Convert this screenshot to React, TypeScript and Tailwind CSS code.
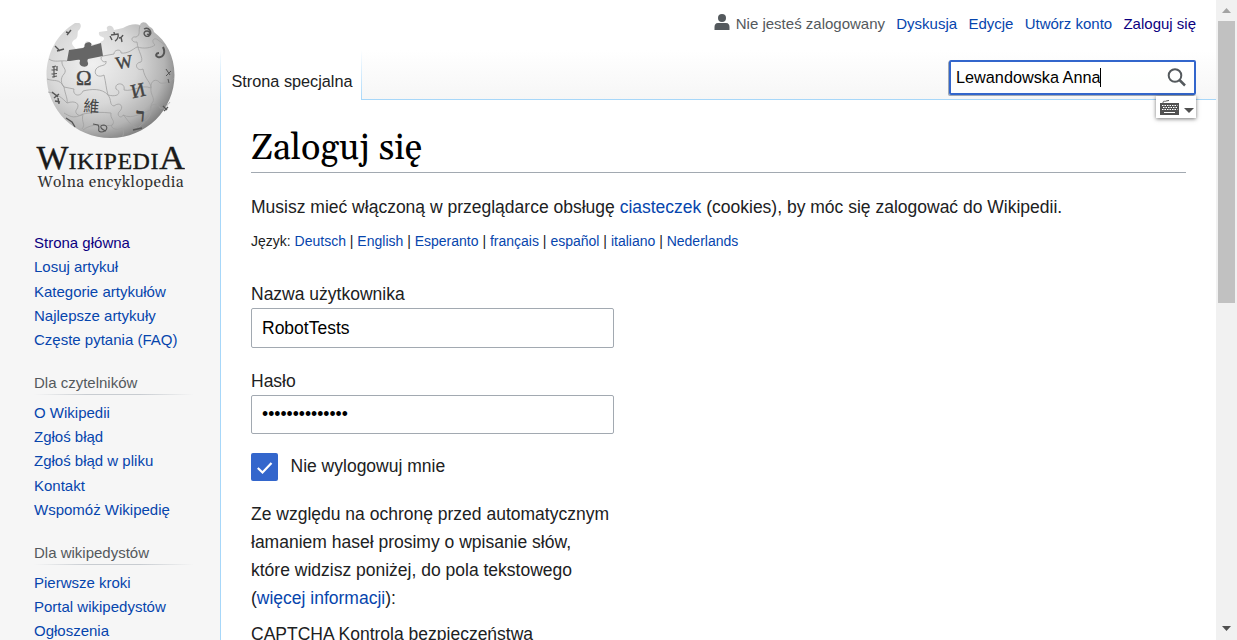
import type { ReactNode } from "react";

const sections: { title?: string; items: string[] }[] = [
  { items: ["Strona główna", "Losuj artykuł", "Kategorie artykułów", "Najlepsze artykuły", "Częste pytania (FAQ)"] },
  { title: "Dla czytelników", items: ["O Wikipedii", "Zgłoś błąd", "Zgłoś błąd w pliku", "Kontakt", "Wspomóż Wikipedię"] },
  { title: "Dla wikipedystów", items: ["Pierwsze kroki", "Portal wikipedystów", "Ogłoszenia"] },
];

const languages = ["Deutsch", "English", "Esperanto", "français", "español", "italiano", "Nederlands"];

function Link({ children, visited = false }: { children: ReactNode; visited?: boolean }) {
  return (
    <a href="#" className={visited ? "text-[#0b0080]" : "text-[#0645ad]"}>
      {children}
    </a>
  );
}

function Logo() {
  return (
    <svg className="block h-[190px] w-[150px]" viewBox="35 10 150 190" aria-label="Wikipedia">
      <defs>
        <radialGradient id="globe" cx="0.36" cy="0.36" r="0.7">
          <stop offset="0" stopColor="#f0f0f0" />
          <stop offset="0.5" stopColor="#d8d8d8" />
          <stop offset="0.8" stopColor="#b4b4b4" />
          <stop offset="1" stopColor="#7c7c7c" />
        </radialGradient>
      </defs>
      <path
        d="M79 23 L75 23 C57 34 46.500 53 46.500 75 C46.500 110 75 138 110.500 138 C146 138 174.500 110 174.500 75 C174.500 56 166 41 154 32 C153 27 150 28 148 25 C145 21 141 22 140 25 C135 23 128 25 123 28 L114 30 C113 25 109 25 107 27 C106 29 109 31 106 31 L99 32 C98 37 102 36 104 38 C104 42 101 40 100 43 L90 45 C91 41 86 40 85 43 C84 46 87 46 85 47 L76 49 C73 45 70 44 74 40 C79 38 77 34 78 31 C81 29 82 24 79 23 Z"
        fill="url(#globe)"
      />
      <path
        d="M69 50 L83 48 C86 47 83 45 86 43 C89 41 93 43 91 46 L101 43 L103 56 L88 59 C86 62 90 63 87 66 C83 68 78 65 80 61 C81 58 73 61 67 61 Z"
        fill="#666"
      />
      <g fill="none" stroke="#a0a0a0" strokeWidth="0.8">
        <path d="M103 56 C98 58 104 64 106 61 C107 67 100 64 96 69 C93 75 99 78 104 75 C106 83 106 88 108 95 C120 98 121 91 116 89 C114 82 126 82 124 90 C133 92 141 84 151 88 C150 80 157 78 160 83 C166 84 171 81 174 78" />
        <path d="M103 56 L114 54 C114 49 122 49 121 53 C128 54 133 49 137 47 C144 49 151 48 155 45 C150 40 155 37 158 40 L165 45" />
        <path d="M140 26 C138 31 141 35 136 37 C130 36 131 43 137 42 C138 52 144 58 141 62 C133 63 137 72 143 69 C145 80 151 82 151 88" />
        <path d="M62 61 C61 67 68 69 64 74 C60 78 61 84 64 87 L74 89 C72 95 80 98 83 91 C91 89 102 88 108 95" />
        <path d="M49 59 C54 63 61 60 67 61 M47 79 C55 82 59 78 64 87 C65 94 68 99 67 103 C76 100 80 104 77 109 C73 113 80 118 83 114 C93 112 102 112 111 113" />
        <path d="M108 95 C112 100 109 105 114 106 C120 101 125 107 119 112 C116 116 122 119 123 115 C132 120 144 112 151 110 C148 104 158 102 160 108 C164 109 168 105 170 102" />
        <path d="M151 88 C150 94 155 98 153 102 C150 104 152 107 151 110 C151 118 145 121 139 127 M111 113 C110 119 115 120 113 124 C108 127 117 132 122 128 C124 130 124 135 122 137" />
        <path d="M48 92 C58 94 62 98 67 103 M64 113 C68 115 73 120 83 114 M83 114 C81 123 86 124 82 129 M83 130 C96 120 111 129 113 124 M123 115 C128 119 128 124 137 128" />
      </g>
      <g fill="#444" stroke="#444" strokeWidth="0.4" className="font-['Liberation_Serif','Noto_Sans_CJK_TC',serif]">
        <text x="76" y="85" fontSize="21">Ω</text>
        <text x="115.500" y="68" fontSize="18" transform="rotate(-10 124 62)">W</text>
        <text x="131" y="97" fontSize="20" transform="rotate(-13 138 91)">И</text>
        <text x="83.500" y="112" fontSize="16" strokeWidth="0" transform="rotate(4 91 106)">維</text>
        <text x="136" y="121" fontSize="18" fontWeight="bold" transform="rotate(5 140 115)">ר</text>
      </g>
      <g fill="none" stroke="#555" strokeWidth="1.400">
        <path d="M110 36 L112 40 M111 35 L118 34 C119 37 117 40 115 41 M114 32 L114.500 35 M123 35 C122 37 120 38 119 38 M121 37 L122 42" />
        <path d="M55 46 L60 51 M57 51 L64 49 M66 32 L69 33 M67 35 L71 30" />
        <path d="M52 67 L56 66 M51.500 70 L57 69.500 M54 66 V78 M51.500 74 L57 73.500 M57 66 V71 M52 77 L57 76" strokeWidth="1.200" />
        <path d="M52 92 L58 97 M54 98 L59 94 M55 101 L60 102 M58 98 L59 104" />
        <path d="M144 29 C149 26 153 33 149 36 C144 38 142 31 147 31 C151 31 150 36 147 34" />
        <path d="M163 47 C166 53 163 58 158 57 C155 56 156 53 159 53" strokeWidth="2" />
        <path d="M93 124 L98 125 C101 128 96 131 101 132 C107 132 109 126 104 125 C99 125 100 129 106 131" strokeWidth="1.1" />
        <path d="M66 118 L72 122 L75 127 M163 106 L167 110 M164 111 L168 107 M133 130 L142 128" />
        <path d="M166 69 L170 75 M166 76 L171 71 M168 79 L169 83" strokeWidth="1" />
      </g>
      <g fill="#1a1a1a" stroke="#1a1a1a" strokeWidth="0.350" className="font-['Liberation_Serif',serif]">
        <text x="36.500" y="169" fontSize="33" textLength="32" lengthAdjust="spacingAndGlyphs">W</text>
        <text x="68.500" y="169" fontSize="24" textLength="90" lengthAdjust="spacing">IKIPEDI</text>
        <text x="159" y="169" fontSize="33" textLength="26" lengthAdjust="spacingAndGlyphs">A</text>
      </g>
      <text x="37.500" y="187" fontSize="15.500" fill="#333" textLength="146" className="font-['Gelasio','Liberation_Serif',serif]">
        Wolna encyklopedia
      </text>
    </svg>
  );
}

function Sidebar() {
  return (
    <aside className="flex h-full w-[220px] shrink-0 flex-col overflow-hidden bg-[linear-gradient(to_bottom,#ffffff_50px,#f6f6f6_100px)]">
      <div className="h-[231px] shrink-0 pt-2.5 pl-[35px]">
        <Logo />
      </div>
      {sections.map((section) => (
        <nav key={section.items[0]} className="shrink-0 pl-[34px] text-[15px]">
          {section.title && (
            <div className="h-[48.6px] pt-[18.6px]">
              <h3 className="h-[23px] leading-[23px] text-[#54595d]">{section.title}</h3>
              <div className="h-px w-[160px] bg-[linear-gradient(to_right,rgba(200,204,209,0)_0%,#c8ccd1_33%,#c8ccd1_66%,rgba(200,204,209,0)_100%)]" />
            </div>
          )}
          <ul>
            {section.items.map((item) => (
              <li key={item} className="h-[24.25px] leading-[24.25px] whitespace-nowrap">
                <Link visited={item === "Strona główna"}>{item}</Link>
              </li>
            ))}
          </ul>
        </nav>
      ))}
    </aside>
  );
}

function KeyboardBadge() {
  return (
    <div className="absolute top-[36px] right-0 flex h-[22px] w-10 items-center bg-white/95 pl-1 shadow-[0_1px_4px_rgba(0,0,0,0.55)]">
      <svg className="h-[15px] w-[34px]" viewBox="0 0 34 15">
        <path d="M3 3 C3 0 5 2 6 1 L9 0.500" fill="none" stroke="#555" />
        <path d="M0 3 H19 V15 H0 Z" fill="#505050" />
        <g stroke="#fff" fill="none">
          <path d="M2 5.500 H17.500" strokeDasharray="1.500 1" />
          <path d="M3 7.500 H17" strokeDasharray="1.500 1" />
          <path d="M2 9.500 H17.500" strokeDasharray="1.500 1" />
          <path d="M4 12.500 H15" />
        </g>
        <path d="M24 8 H34 L29 13 Z" fill="#505050" />
      </svg>
    </div>
  );
}

function Header() {
  return (
    <header className="flex h-[100px] shrink-0 flex-col bg-[linear-gradient(to_bottom,#ffffff_50px,#f6f6f6_100px)]">
      <div className="flex h-[50px] items-start justify-end pt-3 pr-5 text-[15px] leading-6 whitespace-nowrap">
        <svg className="mt-0.5 mr-1.5 h-4 w-4" viewBox="0 0 16 16" fill="#54595d">
          <circle cx="8" cy="4" r="4" />
          <path d="M4 9 H12 C14.500 9 15.500 11 15.500 13 V16 H0.500 V13 C0.500 11 1.500 9 4 9 Z" />
        </svg>
        <div className="flex gap-[11.25px]">
          <span className="text-[#54595d]">Nie jesteś zalogowany</span>
          <Link>Dyskusja</Link>
          <Link>Edycje</Link>
          <Link>Utwórz konto</Link>
          <Link visited>Zaloguj się</Link>
        </div>
      </div>
      <div className="flex h-[50px]">
        <div className="w-px shrink-0 bg-[linear-gradient(to_bottom,#ffffff,#a7d7f9)]" />
        <div className="h-full w-[140px] shrink-0 bg-white pt-[19px] pl-[10.500px] text-[16.25px] leading-6 whitespace-nowrap text-[#202122]">
          Strona specjalna
        </div>
        <div className="w-px shrink-0 bg-[linear-gradient(to_bottom,#ffffff,#a7d7f9)]" />
        <div className="flex flex-1 justify-end border-b border-[#a7d7f9] pr-5">
          <div className="relative mt-2.5 h-[35px] w-[247px]">
            <div className="flex h-[35px] items-center rounded-[2px] border-2 border-[#36c] bg-white/90 pr-2 pl-[5px] text-[16.25px] whitespace-nowrap text-black shadow-[-1px_1px_0_#a2a9b1]">
              <span>Lewandowska Anna</span>
              <span className="-ml-px h-[19px] w-px bg-black" />
              <svg className="ml-auto h-[19px] w-[19px]" viewBox="0 0 19 19" fill="none" stroke="#54595d" strokeWidth="2">
                <circle cx="8" cy="7.500" r="6.300" />
                <path d="M12.500 12 L18 17.500" strokeWidth="2.500" />
              </svg>
            </div>
            <KeyboardBadge />
          </div>
        </div>
      </div>
    </header>
  );
}

function Login() {
  return (
    <main className="h-[540px] border-l border-[#a7d7f9] bg-white pr-[30px] pl-[30px] text-[17.5px] leading-7 whitespace-nowrap text-[#202122]">
      <h1 className="h-[73px] border-b border-[#a2a9b1] pt-[27px] font-['Gelasio','Liberation_Serif',serif] text-[36px] leading-[44px] text-black">
        Zaloguj się
      </h1>
      <p className="mt-5">
        Musisz mieć włączoną w przeglądarce obsługę <Link>ciasteczek</Link> (cookies), by móc się zalogować do Wikipedii.
      </p>
      <p className="mt-[9px] h-[22px] text-sm leading-[22px]">
        Język:{" "}
        {languages.map((lang, i) => (
          <span key={lang}>
            {i > 0 && " | "}
            <Link>{lang}</Link>
          </span>
        ))}
      </p>
      <form className="w-[363px] pt-[28px]">
        <div className="h-7">Nazwa użytkownika</div>
        <div className="flex h-10 items-center rounded-[2px] border border-[#a2a9b1] pl-2.5 text-black">RobotTests</div>
        <div className="mt-[19px] h-7">Hasło</div>
        <div className="flex h-[39px] items-center rounded-[2px] border border-[#a2a9b1] pb-px pl-2.5 text-black">••••••••••••••</div>
        <div className="mt-[19px] flex h-7 items-center">
          <span className="flex h-7 w-[27px] items-center justify-center rounded-[2px] bg-[#36c]">
            <svg className="mt-px h-[14px] w-4" viewBox="0 0 16 14" fill="none" stroke="#fff" strokeWidth="2.200">
              <path d="M0.800 7 L5.500 11.500 L14.500 2" />
            </svg>
          </span>
          <span className="-mt-0.5 ml-[12.5px]">Nie wylogowuj mnie</span>
        </div>
        <p className="mt-[19px]">
          Ze względu na ochronę przed automatycznym
          <br />
          łamaniem haseł prosimy o wpisanie słów,
          <br />
          które widzisz poniżej, do pola tekstowego
          <br />(<Link>więcej informacji</Link>):
        </p>
        <div className="mt-2 h-7">CAPTCHA Kontrola bezpieczeństwa</div>
      </form>
    </main>
  );
}

function Scrollbar() {
  return (
    <div className="flex h-full w-[21px] shrink-0 flex-col items-center bg-[#f1f1f1]">
      <div className="flex h-[21px] w-full items-center justify-center">
        <svg className="h-[5px] w-[9px]" viewBox="0 0 9 5">
          <path d="M0 5 L4.500 0 L9 5 Z" fill="#a3a3a3" />
        </svg>
      </div>
      <div className="h-[282px] w-[17px] bg-[#c1c1c1]" />
      <div className="mt-auto flex h-[23px] w-full items-center justify-center">
        <svg className="h-[5px] w-[9px]" viewBox="0 0 9 5">
          <path d="M0 0 L4.500 5 L9 0 Z" fill="#505050" />
        </svg>
      </div>
    </div>
  );
}

export default function App() {
  return (
    <div className="flex h-[640px] w-full overflow-hidden bg-[#f6f6f6] font-['Liberation_Sans',sans-serif]">
      <Sidebar />
      <div className="flex min-w-0 flex-1 flex-col">
        <Header />
        <Login />
      </div>
      <Scrollbar />
    </div>
  );
}
